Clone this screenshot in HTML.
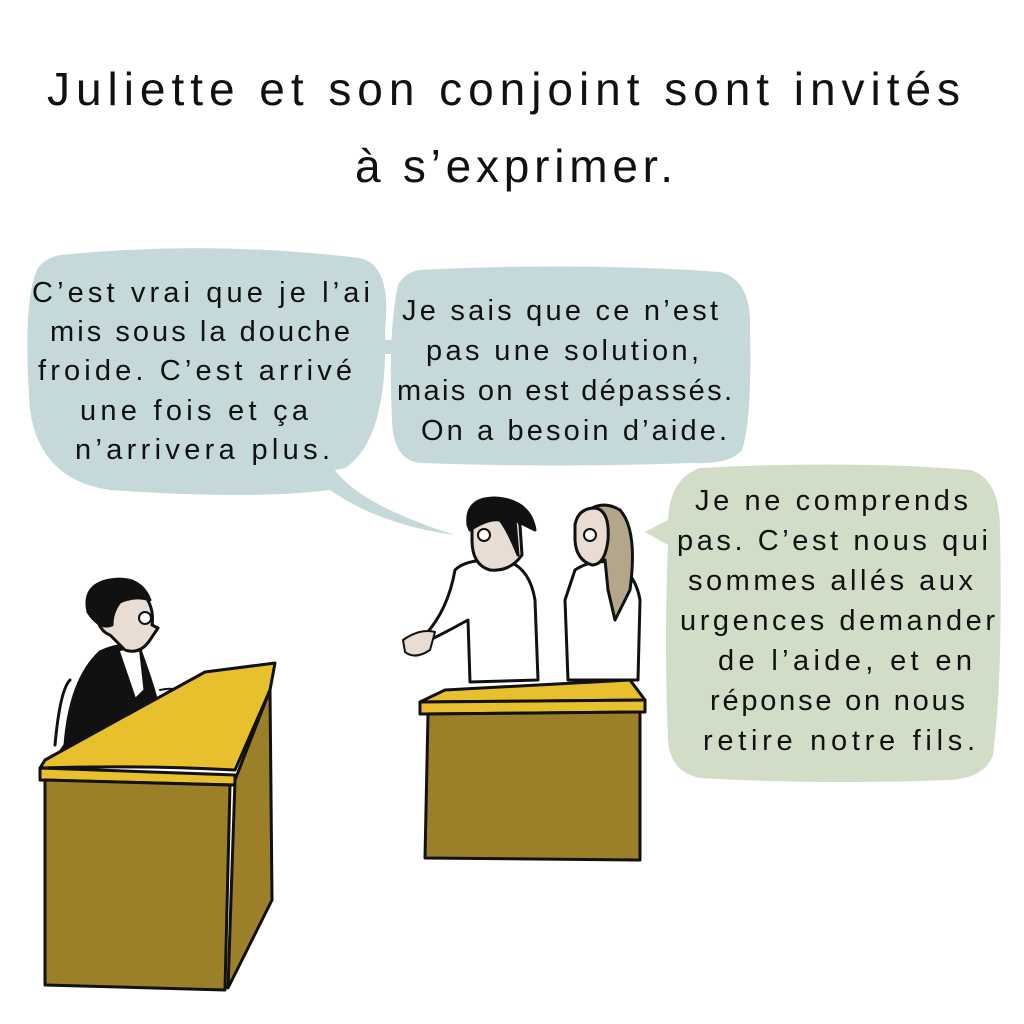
<!DOCTYPE html>
<html><head><meta charset="utf-8"><style>
html,body{margin:0;padding:0;background:#fff;width:1024px;height:1024px;overflow:hidden}
svg{display:block}
text{font-family:"Liberation Sans","DejaVu Sans",sans-serif;fill:#111}
</style></head><body>
<svg width="1024" height="1024" viewBox="0 0 1024 1024">
<rect width="1024" height="1024" fill="#fff"/>
<g font-size="46" lengthAdjust="spacing">
<text x="47" y="105" textLength="913" lengthAdjust="spacing">Juliette et son conjoint sont invités</text>
<text x="355" y="182" textLength="318" lengthAdjust="spacing">à s’exprimer.</text>
</g>
<!-- left bubble -->
<path d="M60 255 Q210 240 360 258 Q392 265 385 330 Q388 440 345 468 L335 470 Q360 505 455 535 Q380 525 330 490 Q250 500 110 490 Q40 480 30 410 Q22 300 38 268 Q45 258 60 255Z" fill="#c5d9da"/>
<rect x="380" y="340" width="20" height="14" fill="#c5d9da"/>
<!-- middle bubble -->
<path d="M420 270 Q580 262 720 272 Q752 280 750 330 Q752 420 742 450 Q730 465 690 463 Q560 468 420 463 Q393 460 392 420 Q388 330 398 285 Q405 272 420 270Z" fill="#c5d9da"/>
<!-- right bubble -->
<path d="M700 468 Q850 460 970 470 Q1000 478 1000 530 Q1003 680 993 755 Q985 778 950 780 Q820 785 700 778 Q670 772 668 740 Q664 640 668 545 L645 532 L668 520 Q670 478 700 468Z" fill="#d2ddc7"/>
<g font-size="29">
<text x="32" y="302" textLength="338" lengthAdjust="spacing">C’est vrai que je l’ai</text>
<text x="50" y="341" textLength="300" lengthAdjust="spacing">mis sous la douche</text>
<text x="38" y="380" textLength="314" lengthAdjust="spacing">froide. C’est arrivé</text>
<text x="80" y="420" textLength="228" lengthAdjust="spacing">une fois et ça</text>
<text x="75" y="459" textLength="255" lengthAdjust="spacing">n’arrivera plus.</text>
<text x="402" y="320" textLength="316" lengthAdjust="spacing">Je sais que ce n’est</text>
<text x="426" y="360" textLength="273" lengthAdjust="spacing">pas une solution,</text>
<text x="397" y="400" textLength="335" lengthAdjust="spacing">mais on est dépassés.</text>
<text x="421" y="440" textLength="306" lengthAdjust="spacing">On a besoin d’aide.</text>
<text x="695" y="510" textLength="273" lengthAdjust="spacing">Je ne comprends</text>
<text x="677" y="550" textLength="311" lengthAdjust="spacing">pas. C’est nous qui</text>
<text x="688" y="590" textLength="285" lengthAdjust="spacing">sommes allés aux</text>
<text x="680" y="630" textLength="315" lengthAdjust="spacing">urgences demander</text>
<text x="718" y="670" textLength="254" lengthAdjust="spacing">de l’aide, et en</text>
<text x="710" y="710" textLength="255" lengthAdjust="spacing">réponse on nous</text>
<text x="703" y="750" textLength="272" lengthAdjust="spacing">retire notre fils.</text>
</g>
<g stroke="#111" stroke-width="3" stroke-linejoin="round" stroke-linecap="round">
<!-- judge -->
<path d="M55 745 Q60 690 70 680" fill="none"/>
<path d="M65 745 Q70 680 100 652 Q125 640 140 650 Q155 690 160 715 L185 700 L190 710 Q170 735 130 740 Q90 750 60 752Z" fill="#111"/>
<path d="M118 650 L140 645 L145 690 L135 700 Z" fill="#fff"/>
<path d="M95 600 Q110 578 140 590 Q155 605 152 625 L158 628 L150 640 Q140 655 125 650 L110 635 Q95 630 95 600Z" fill="#e8dcd3"/>
<path d="M88 612 Q82 585 110 580 Q140 575 150 600 Q135 595 120 602 Q112 612 112 625 Q100 630 88 612Z" fill="#111"/>
<circle cx="145" cy="618" r="6" fill="#fff" stroke-width="2"/>
<path d="M160 690 Q180 685 185 700" fill="#e8dcd3" stroke-width="2"/>
<!-- left desk -->
<path d="M45 760 L205 672 L275 663 L270 690 L235 770 Q140 765 40 768Z" fill="#e8bf2c"/>
<path d="M40 768 L235 775 L235 785 L40 780Z" fill="#e8bf2c"/>
<path d="M45 780 L230 785 L225 990 L45 985Z" fill="#9c7f29"/>
<path d="M235 780 L270 690 L272 900 L228 988Z" fill="#9c7f29"/>
<!-- man -->
<path d="M455 570 Q465 560 490 560 L510 562 Q530 570 535 600 L538 680 L470 682 L468 620 Q450 630 430 640 L425 635 Q448 610 455 570Z" fill="#fff"/>
<path d="M403 640 Q420 628 435 632 L430 650 Q415 660 405 652Z" fill="#e8dcd3" stroke-width="2"/>
<path d="M472 520 Q472 508 490 505 Q515 508 520 525 L522 555 Q510 572 490 570 Q472 565 472 540Z" fill="#e8dcd3"/>
<path d="M468 525 Q465 498 495 498 Q530 500 535 530 Q525 525 515 520 L518 555 Q508 530 500 520 Q488 518 470 530Z" fill="#111"/>
<circle cx="484" cy="535" r="6" fill="#fff" stroke-width="2"/>
<!-- woman -->
<path d="M575 570 Q590 560 610 562 Q635 570 640 600 L638 680 L568 680 L565 600Z" fill="#fff"/>
<path d="M583 515 Q600 498 620 510 Q638 530 630 590 L615 620 L608 590 L605 560 Q590 565 580 555 Z" fill="#b3a68a"/>
<path d="M575 525 Q578 508 595 508 Q610 510 608 540 Q605 565 592 565 Q576 560 575 540Z" fill="#e8dcd3"/>
<circle cx="590" cy="535" r="6" fill="#fff" stroke-width="2"/>
<!-- middle desk -->
<path d="M445 690 L630 680 L645 700 L420 702Z" fill="#e8bf2c"/>
<path d="M420 702 L645 700 L645 712 L420 714Z" fill="#e8bf2c"/>
<path d="M428 714 L640 712 L640 860 L425 858Z" fill="#9c7f29"/>
</g>
</svg>
</body></html>
